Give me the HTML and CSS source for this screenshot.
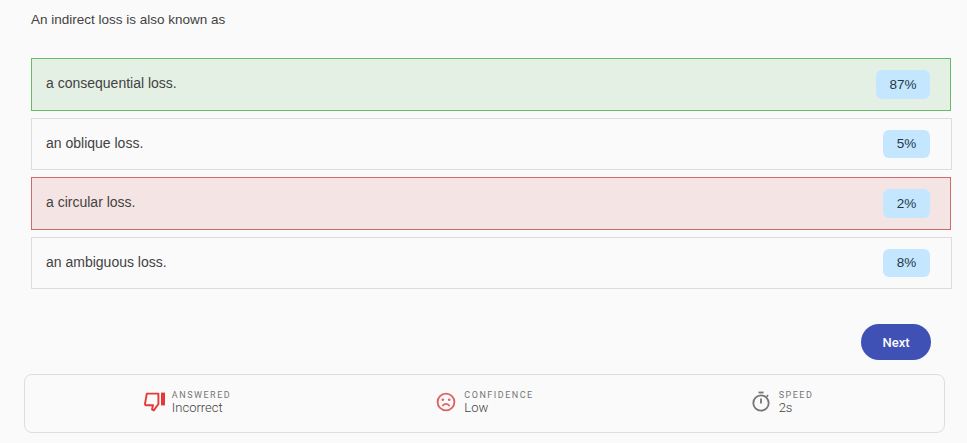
FILE: index.html
```html
<!DOCTYPE html>
<html lang="en">
<head>
    <meta charset="UTF-8">
    <meta name="viewport" content="width=device-width, initial-scale=1.0">
    <title>Question</title>
    <link rel="stylesheet" href="styles.css">
</head>
<body>
    <main class="question">
        <p class="question-text">An indirect loss is also known as</p>

        <div class="answers">
            <div class="answer answer-correct">
                <span class="answer-text">a consequential loss.</span>
                <span class="percent percent-wide">87%</span>
            </div>
            <div class="answer">
                <span class="answer-text">an oblique loss.</span>
                <span class="percent">5%</span>
            </div>
            <div class="answer answer-wrong">
                <span class="answer-text">a circular loss.</span>
                <span class="percent">2%</span>
            </div>
            <div class="answer">
                <span class="answer-text">an ambiguous loss.</span>
                <span class="percent">8%</span>
            </div>
        </div>

        <div class="actions">
            <button class="next-btn" type="button">Next</button>
        </div>
    </main>

    <section class="summary">
        <div class="stat stat-answered">
            <svg class="stat-icon" width="22" height="22" viewBox="0 0 22 22" fill="none">
                <path d="M2.8 2.6H14.4V13L9.8 19.4 8 18.4 9 14.2H2.2C1.4 14.2 .9 13.6 1 12.9L2.8 2.6Z" stroke="#e53935" stroke-width="1.9" stroke-linejoin="round"/>
                <rect x="17" y="1.6" width="4" height="12.8" fill="#e53935"/>
            </svg>
            <div class="stat-text">
                <span class="stat-label">Answered</span>
                <span class="stat-value">Incorrect</span>
            </div>
        </div>
        <div class="stat stat-confidence">
            <svg class="stat-icon" width="22" height="22" viewBox="0 0 22 22" fill="none">
                <circle cx="11" cy="11" r="8.4" stroke="#dd6464" stroke-width="1.9"/>
                <circle cx="7.8" cy="8.8" r="1.3" fill="#dd6464"/>
                <circle cx="14.2" cy="8.8" r="1.3" fill="#dd6464"/>
                <path d="M7.4 15.2c.7-1.5 2-2.3 3.6-2.3s2.9.8 3.6 2.3" stroke="#dd6464" stroke-width="1.7"/>
            </svg>
            <div class="stat-text">
                <span class="stat-label">Confidence</span>
                <span class="stat-value">Low</span>
            </div>
        </div>
        <div class="stat stat-speed">
            <svg class="stat-icon" width="22" height="24" viewBox="0 0 22 24" fill="none">
                <path d="M8.5 2.5h5" stroke="#757575" stroke-width="1.8"/>
                <circle cx="11" cy="13" r="7.7" stroke="#757575" stroke-width="1.8"/>
                <path d="M11 8.6v5" stroke="#757575" stroke-width="1.8"/>
                <path d="m16.6 6.6 1.5-1.5" stroke="#757575" stroke-width="1.6"/>
            </svg>
            <div class="stat-text">
                <span class="stat-label">Speed</span>
                <span class="stat-value">2s</span>
            </div>
        </div>
    </section>
</body>
</html>
```

FILE: styles.css
```css
html, body {
    height: 100%;
}

body {
    margin: 0;
    background: #fafafa;
    color: #424242;
    font-family: "Liberation Sans", Arial, sans-serif;
    font-size: 14px;
    overflow: hidden;
}

.question {
    padding: 0 15px 0 31px;
}

.question-text {
    margin: 0;
    padding-top: 12px;
    height: 58px;
    box-sizing: border-box;
    font-size: 13.5px;
    line-height: 16px;
}

.answers {
    display: flex;
    flex-direction: column;
    gap: 7px;
}

.answer {
    display: flex;
    align-items: center;
    justify-content: space-between;
    box-sizing: border-box;
    height: 52px;
    padding: 0 21px 0 14px;
    background: #fafafa;
    border: 1px solid #dcdcdc;
}

.answer-text {
    padding-bottom: 2px;
}

.answer-correct,
.answer-wrong {
    height: 53px;
    margin-right: 1px;
    padding-right: 20px;
}

.answer-correct {
    background: #e5f0e5;
    border-color: #66bb6a;
}

.answer-wrong {
    background: #f5e4e4;
    border-color: #cd6a6a;
}

.answer-correct .answer-text,
.answer-wrong .answer-text {
    padding-bottom: 4px;
}

.percent {
    box-sizing: border-box;
    width: 47px;
    height: 28px;
    line-height: 28px;
    text-align: center;
    font-size: 13.5px;
    border-radius: 6px;
    background: #c5e6ff;
    color: #22384a;
}

.answer-correct .percent,
.answer-wrong .percent {
    height: 29px;
    line-height: 29px;
}

.percent-wide {
    width: 54px;
}

.actions {
    display: flex;
    justify-content: flex-end;
    padding: 35px 21px 0 0;
}

.next-btn {
    width: 70px;
    height: 36px;
    border: 0;
    border-radius: 18px;
    background: #3f51b5;
    color: #fafafa;
    font-family: Roboto, sans-serif;
    font-size: 13px;
    font-weight: 500;
}

.summary {
    display: grid;
    grid-template-columns: 1fr 1fr 1fr;
    box-sizing: border-box;
    height: 59px;
    margin: 14px 22px 0 24px;
    padding: 0 14px 3px;
    border: 1px solid #dedede;
    border-radius: 8px;
    font-family: Roboto, sans-serif;
}

.stat {
    display: flex;
    align-items: center;
    justify-content: center;
    gap: 6px;
}

.stat-confidence,
.stat-speed {
    gap: 7px;
}

.stat-text {
    display: flex;
    flex-direction: column;
}

.stat-label {
    font-size: 9px;
    line-height: 11px;
    letter-spacing: 1.5px;
    text-transform: uppercase;
    color: #757575;
}

.stat-value {
    font-size: 13px;
    line-height: 14px;
    font-weight: 300;
    color: #424242;
}
```
